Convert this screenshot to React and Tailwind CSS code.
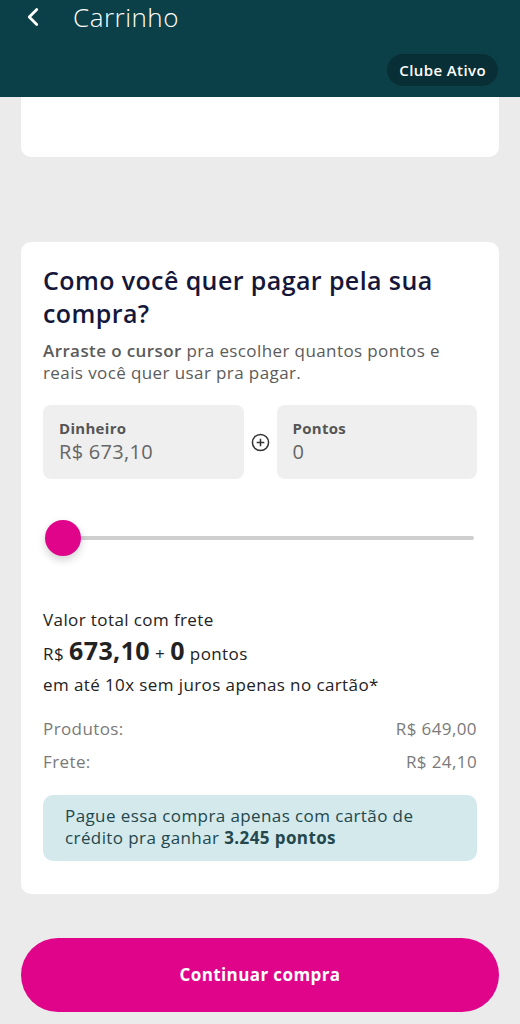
import { ChevronLeft } from "lucide-react";

export default function App() {
  return (
    <div
      className="min-h-screen bg-[#ebebeb] flex flex-col"
      style={{ fontFamily: "'Open Sans', Lato, sans-serif" }}
    >
      {/* Header */}
      <div className="bg-[#0c4048] h-[97px] px-5 pt-[3px] flex flex-col">
        <div className="flex items-center h-[28px]">
          <ChevronLeft className="text-white -ml-[2px]" size={30} strokeWidth={2.2} />
          <span className="ml-[25px] text-white text-[26px] font-light tracking-[0.5px]">Carrinho</span>
        </div>
        <div className="flex justify-end mt-[23px] pr-[2px]">
          <span className="bg-[#082f35] text-white text-[15px] font-semibold tracking-[0.4px] rounded-full px-3 h-[32px] flex items-center">
            Clube Ativo
          </span>
        </div>
      </div>

      <div className="px-[21px] flex flex-col">
        {/* Previous card tail */}
        <div className="bg-white h-[60px] rounded-b-[10px]" />

        {/* Payment card */}
        <div className="bg-white rounded-[10px] mt-[85px] px-[22px] pt-[22px] pb-[33px]">
          <h1 className="text-[#15173a] text-[25px] font-semibold tracking-[0.4px] leading-[33px]">
            Como você quer pagar pela sua compra?
          </h1>
          <p className="text-[#5b5b5b] text-[17px] tracking-[0.4px] leading-[22px] mt-[10px]">
            <span className="font-semibold">Arraste o cursor</span> pra escolher quantos pontos e
            <br />
            reais você quer usar pra pagar.
          </p>

          <div className="flex items-center mt-[21px]">
            <div className="flex-1 bg-[#efefef] rounded-[8px] h-[74px] px-4 pt-[14px]">
              <div className="text-[#555] text-[15px] font-bold tracking-[0.3px] leading-[18px]">Dinheiro</div>
              <div className="text-[#666] text-[20px] tracking-[0.3px] leading-[26px] mt-[2px]">R$ 673,10</div>
            </div>
            <div className="w-[33px] flex justify-center">
              <svg width="19" height="19" viewBox="0 0 20 20" fill="none" stroke="#333" strokeWidth="1.6">
                <circle cx="10" cy="10" r="8.5" />
                <path d="M10 6v8M6 10h8" />
              </svg>
            </div>
            <div className="flex-1 bg-[#efefef] rounded-[8px] h-[74px] px-4 pt-[14px]">
              <div className="text-[#555] text-[15px] font-bold tracking-[0.3px] leading-[18px]">Pontos</div>
              <div className="text-[#666] text-[20px] tracking-[0.3px] leading-[26px] mt-[2px]">0</div>
            </div>
          </div>

          {/* Slider */}
          <div className="relative h-[36px] mt-[41px] flex items-center">
            <div className="ml-[20px] mr-[3px] flex-1 h-[4px] bg-[#cfcfcf] rounded-full" />
            <div className="absolute left-[2px] top-0 w-[36px] h-[36px] rounded-full bg-[#e0048b] shadow-[0_4px_8px_rgba(0,0,0,0.18)]" />
          </div>

          <div className="tracking-[0.4px] text-[#222] text-[17px]">
            <div className="mt-[53px] leading-[22px]">Valor total com frete</div>
            <div className="mt-[4px] leading-[30px] flex items-baseline">
              <span>R$</span>
              <span className="text-[25px] font-bold ml-[5px]">673,10</span>
              <span className="ml-[5px]">+</span>
              <span className="text-[25px] font-bold ml-[5px]">0</span>
              <span className="ml-[5px]">pontos</span>
            </div>
            <div className="leading-[22px] mt-[5px]">em até 10x sem juros apenas no cartão*</div>
          </div>

          <div className="mt-[22px] text-[#7a7a7a] text-[17px] tracking-[0.4px] leading-[22px] flex flex-col gap-[11px]">
            <div className="flex justify-between">
              <span>Produtos:</span>
              <span>R$ 649,00</span>
            </div>
            <div className="flex justify-between">
              <span>Frete:</span>
              <span>R$ 24,10</span>
            </div>
          </div>

          <div className="mt-[22px] bg-[#d3e9ec] rounded-[10px] pl-[22px] pr-4 pt-[10px] pb-[12px] text-[#23474c] text-[17px] tracking-[0.4px] leading-[22px]">
            Pague essa compra apenas com cartão de
            <br />
            crédito pra ganhar <span className="font-bold">3.245 pontos</span>
          </div>
        </div>

        {/* Button */}
        <button className="mt-[44px] h-[74px] rounded-full bg-[#e0048b] text-white text-[17px] font-bold tracking-[0.4px]">
          Continuar compra
        </button>
      </div>
    </div>
  );
}
